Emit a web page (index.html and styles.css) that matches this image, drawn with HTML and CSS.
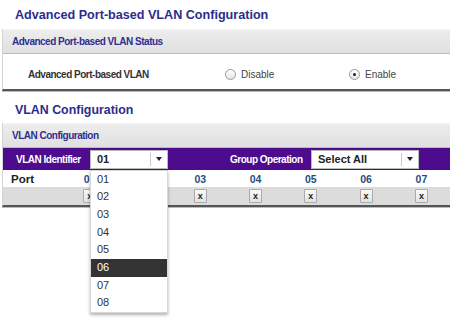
FILE: index.html
```html
<!DOCTYPE html>
<html lang="en">
<head>
  <meta charset="UTF-8" />
  <title>Advanced Port-based VLAN Configuration</title>
  <link rel="stylesheet" href="styles.css">
</head>
<body>
  <div class="page">
    <h1 class="page-title">Advanced Port-based VLAN Configuration</h1>

    <div class="panel">
      <div class="panel-head">Advanced Port-based VLAN Status</div>
      <div class="status-row">
        <span class="status-label">Advanced Port-based VLAN</span>
        <label class="radio"><span class="radio-dot"></span>Disable</label>
        <label class="radio checked"><span class="radio-dot"></span>Enable</label>
      </div>
    </div>

    <h2 class="section-title">VLAN Configuration</h2>

    <div class="panel">
      <div class="panel-head">VLAN Configuration</div>
      <div class="toolbar">
        <span class="tool-label">VLAN Identifier</span>
        <div class="select select-vlan">
          <span class="select-value">01</span>
          <span class="select-arrow"></span>
          <ul class="dropdown">
            <li>01</li>
            <li>02</li>
            <li>03</li>
            <li>04</li>
            <li>05</li>
            <li class="active">06</li>
            <li>07</li>
            <li>08</li>
          </ul>
        </div>
        <span class="tool-label group-label">Group Operation</span>
        <div class="select select-group">
          <span class="select-value">Select All</span>
          <span class="select-arrow"></span>
        </div>
      </div>
      <div class="port-grid port-head">
        <span class="port-label">Port</span>
        <span>01</span>
        <span>02</span>
        <span>03</span>
        <span>04</span>
        <span>05</span>
        <span>06</span>
        <span>07</span>
      </div>
      <div class="port-grid port-btns">
        <span></span>
        <span><button class="xbtn">x</button></span>
        <span><button class="xbtn">x</button></span>
        <span><button class="xbtn">x</button></span>
        <span><button class="xbtn">x</button></span>
        <span><button class="xbtn">x</button></span>
        <span><button class="xbtn">x</button></span>
        <span><button class="xbtn">x</button></span>
      </div>
    </div>
  </div>
</body>
</html>
```

FILE: styles.css
```css
* {
  box-sizing: border-box;
  font-family: "Liberation Sans", Arial, sans-serif;
}

body {
  margin: 0;
  background: #fff;
  min-height: 322px;
}

.page {
  padding: 8px 0 0 2px;
}

.page-title,
.section-title {
  margin: 0 0 7px 13px;
  font-size: 12.6px;
  font-weight: bold;
  color: #2c2c8c;
  white-space: nowrap;
}

.section-title {
  margin-top: 12px;
  margin-bottom: 6px;
  font-size: 12.4px;
}

.panel {
  border-left: 1px solid #d4d4d4;
  border-bottom: 2px solid #555;
  box-shadow: 0 1px 0 #bbb;
}

.panel-head {
  height: 25px;
  line-height: 24px;
  padding-left: 9px;
  font-size: 10px;
  letter-spacing: -0.5px;
  font-weight: bold;
  color: #2f2f8f;
  background: linear-gradient(#ededed, #e0e0e0);
  border-top: 1px solid #f4f4f4;
  border-bottom: 1px solid #bdbdbd;
  white-space: nowrap;
}

.status-row {
  display: flex;
  align-items: center;
  height: 35px;
  padding: 5px 0 0 25px;
  font-size: 10px;
  color: #333;
  white-space: nowrap;
}

.status-label {
  flex-shrink: 0;
  width: 197px;
  font-size: 10px;
  letter-spacing: -0.5px;
  font-weight: bold;
}

.radio {
  flex-shrink: 0;
  display: flex;
  align-items: center;
  gap: 5px;
  width: 124px;
  color: #444;
}

.radio.checked {
  width: auto;
}

.radio-dot {
  width: 11px;
  height: 11px;
  border: 1px solid #999;
  border-radius: 50%;
  background: linear-gradient(#fff, #e6e6e6);
  position: relative;
}

.radio.checked .radio-dot::after {
  content: "";
  position: absolute;
  left: 3px;
  top: 3px;
  width: 3px;
  height: 3px;
  border-radius: 50%;
  background: #222;
}

.toolbar {
  display: flex;
  align-items: center;
  height: 22px;
  background: #4d0b8e;
  padding-left: 13px;
  font-size: 11px;
  white-space: nowrap;
}

.tool-label {
  color: #fff;
  font-weight: bold;
  font-size: 10px;
  letter-spacing: -0.5px;
  width: 74px;
}

.group-label {
  width: 81px;
  margin-left: 62px;
}

.select {
  position: relative;
  height: 19px;
  background: #fff;
  border: 1px solid #bbb;
  display: flex;
  align-items: center;
  padding-left: 6px;
  font-weight: bold;
  color: #222;
}

.select-vlan {
  width: 78px;
}

.select-group {
  width: 108px;
}

.select-value {
  flex: 1;
}

.select-arrow {
  width: 17px;
  height: 13px;
  border-left: 1px solid #ccc;
  position: relative;
}

.select-arrow::after {
  content: "";
  position: absolute;
  left: 5px;
  top: 4px;
  border-left: 3px solid transparent;
  border-right: 3px solid transparent;
  border-top: 4px solid #222;
}

.dropdown {
  position: absolute;
  left: -1px;
  top: 19px;
  width: 78px;
  margin: 0;
  padding: 0;
  list-style: none;
  background: #fff;
  border: 1px solid #d8d8d8;
  box-shadow: 0 2px 3px rgba(0, 0, 0, 0.3);
  z-index: 5;
}

.dropdown li {
  display: block;
  height: 17.7px;
  line-height: 17.7px;
  padding-left: 6px;
  font-weight: normal;
  color: #333;
}

.dropdown li.active {
  background: #333;
  color: #fff;
}

.port-grid {
  display: grid;
  grid-template-columns: 59px repeat(7, 55.3px);
  align-items: center;
  text-align: center;
  font-size: 10.5px;
}

.port-head {
  height: 17px;
  font-weight: bold;
  color: #1f4f7f;
}

.port-label {
  text-align: left;
  padding-left: 8px;
  color: #222;
  font-size: 11.5px;
}

.port-btns {
  height: 18px;
  background: #dcdcdc;
}

.xbtn {
  width: 13px;
  height: 14px;
  padding: 0;
  font-size: 9px;
  font-weight: bold;
  color: #222;
  line-height: 11px;
  border: 1px solid #aaa;
  border-radius: 1px;
  background: linear-gradient(#fafafa, #e2e2e2);
}
```
